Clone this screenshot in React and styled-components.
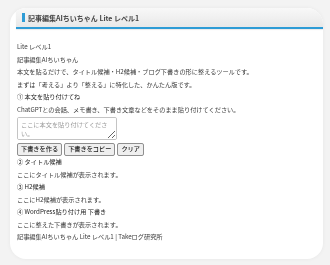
import React from "react";
import styled, { createGlobalStyle } from "styled-components";

const GlobalStyle = createGlobalStyle`
  html, body { margin: 0; padding: 0; }
  body {
    background: #f3f3f3;
    font-family: "Noto Sans CJK JP", "Noto Sans", sans-serif;
    color: #333;
  }
`;

const Page = styled.div`
  padding: 8px 7px 6px 10px;
`;

const Card = styled.div`
  width: 313px;
  background: #fff;
  border-radius: 16px;
  overflow: hidden;
  box-shadow: 0 0 4px rgba(0, 0, 0, 0.05);
`;

const Header = styled.div`
  margin-left: 6px;
  height: 19px;
  display: flex;
  align-items: center;
  padding-left: 6px;
  background: linear-gradient(#f8f8f8, #e8e8e8);
  border-bottom: 2px solid #2e9cd6;
  border-top-left-radius: 3px;
  box-shadow: 0 1px 1px rgba(0, 0, 0, 0.08);
  font-size: 7px;
  font-weight: bold;
  color: #444;
  white-space: nowrap;

  &::before {
    content: "";
    width: 2.5px;
    height: 9px;
    background: #2e9cd6;
    margin-right: 3.5px;
  }
`;

const Body = styled.div`
  padding: 12px 7px 15px 7px;
`;

const Line = styled.div`
  font-size: 6.2px;
  line-height: 12.5px;
  white-space: nowrap;
  color: ${(p) => (p.$head ? "#222" : "#3a3a3a")};
  font-weight: 400;
`;

const TextArea = styled.textarea`
  display: block;
  box-sizing: border-box;
  width: 100px;
  height: 23px;
  margin: 1px 0 0;
  padding: 3px 3px;
  border: 1px solid #c4c4c4;
  border-radius: 2px;
  font-family: inherit;
  font-size: 6.2px;
  line-height: 8.5px;
  color: #333;
  background: #fff;
  &::placeholder { color: #9a9a9a; }
`;

const ButtonRow = styled.div`
  display: flex;
  gap: 2px;
  margin-top: 3px;
`;

const Button = styled.button`
  height: 13px;
  padding: 0 3px;
  border: 1px solid #8f8f8f;
  border-radius: 2px;
  background: #efefef;
  font-family: inherit;
  font-size: 6.2px;
  font-weight: 500;
  color: #222;
  line-height: 1;
  white-space: nowrap;
`;

export default function App() {
  return (
    <>
      <GlobalStyle />
      <Page>
        <Card>
          <Header>記事編集AIちいちゃん Lite レベル1</Header>
          <Body>
            <Line>Lite レベル1</Line>
            <Line>記事編集AIちいちゃん</Line>
            <Line>本文を貼るだけで、タイトル候補・H2候補・ブログ下書きの形に整えるツールです。</Line>
            <Line>まずは「考える」より「整える」に特化した、かんたん版です。</Line>
            <Line $head>① 本文を貼り付けてね</Line>
            <Line>ChatGPTとの会話、メモ書き、下書き文章などをそのまま貼り付けてください。</Line>
            <TextArea placeholder="ここに本文を貼り付けてください。" />
            <ButtonRow>
              <Button>下書きを作る</Button>
              <Button>下書きをコピー</Button>
              <Button>クリア</Button>
            </ButtonRow>
            <Line $head>② タイトル候補</Line>
            <Line>ここにタイトル候補が表示されます。</Line>
            <Line $head>③ H2候補</Line>
            <Line>ここにH2候補が表示されます。</Line>
            <Line $head>④ WordPress貼り付け用 下書き</Line>
            <Line>ここに整えた下書きが表示されます。</Line>
            <Line>記事編集AIちいちゃん Lite レベル1 | Takeログ研究所</Line>
          </Body>
        </Card>
      </Page>
    </>
  );
}
